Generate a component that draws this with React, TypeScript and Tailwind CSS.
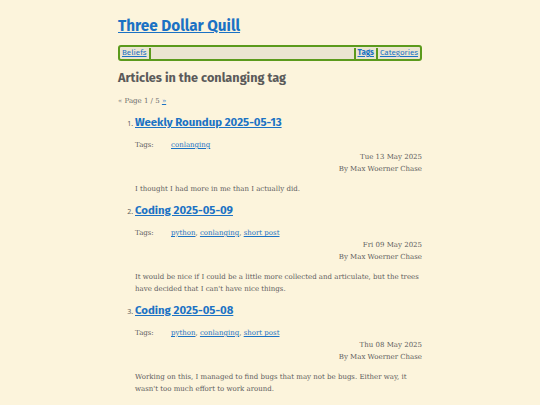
import React from "react";

const articles = [
  {
    title: "Weekly Roundup 2025-05-13",
    tags: ["conlanging"],
    date: "Tue 13 May 2025",
    summary: "I thought I had more in me than I actually did.",
  },
  {
    title: "Coding 2025-05-09",
    tags: ["python", "conlanging", "short post"],
    date: "Fri 09 May 2025",
    summary:
      "It would be nice if I could be a little more collected and articulate, but the trees have decided that I can't have nice things.",
  },
  {
    title: "Coding 2025-05-08",
    tags: ["python", "conlanging", "short post"],
    date: "Thu 08 May 2025",
    summary:
      "Working on this, I managed to find bugs that may not be bugs. Either way, it wasn't too much effort to work around.",
  },
];

const sans = "font-['Fira_Sans','Open_Sans',sans-serif]";
const serif = "font-['Roboto_Slab','DejaVu_Serif',serif]";

export default function App() {
  return (
    <div className="min-h-screen bg-[#fcf4dc] text-[#5a5a5a]">
      <div className="w-[304px] mx-auto pt-[15px]">
        {/* Header */}
        <h1 className={`${sans} text-[15.3px] font-bold leading-[22px]`}>
          <a href="#" className="text-[#1b72c4] underline">Three Dollar Quill</a>
        </h1>

        {/* Nav */}
        <nav className={`${sans} mt-[8px] flex items-center h-[16px] border-2 border-[#5b9a1c] rounded-[3px] bg-[#ebe5d1] text-[8px] px-[1px]`}>
          <a href="#" className="text-[#1b72c4] underline px-[1px]">Beliefs</a>
          <span className="w-[2px] h-[11px] bg-[#5b9a1c] ml-[1px]" />
          <span className="flex-1" />
          <span className="w-[2px] h-[11px] bg-[#5b9a1c] mr-[1px]" />
          <a href="#" className="text-[#1b72c4] underline font-bold px-[1px]">Tags</a>
          <span className="w-[2px] h-[11px] bg-[#5b9a1c] mx-[1px]" />
          <a href="#" className="text-[#1b72c4] underline px-[1px]">Categories</a>
        </nav>

        <h2 className={`${sans} mt-[8px] text-[12.7px] font-bold leading-[18px] text-[#5a5a5a]`}>
          Articles in the conlanging tag
        </h2>

        <p className={`${serif} mt-[8px] text-[7px] leading-[12px] text-[#6a6a6a]`}>
          « Page 1 / 5 <a href="#" className="text-[#1b72c4] underline">»</a>
        </p>

        {/* Articles */}
        <ol className="mt-[6px] pl-[17px] list-decimal marker:text-[7px] marker:text-[#5c5c5c]">
          {articles.map((a) => (
            <li key={a.title} className="mb-[6px]">
              <h3 className={`${sans} text-[11.4px] font-bold leading-[18px]`}>
                <a href="#" className="text-[#1b72c4] underline">{a.title}</a>
              </h3>
              <div className={`${serif} text-[7px] text-[#5c5c5c]`}>
                <div className="mt-[8px] flex leading-[12px]">
                  <span className="w-[36px]">Tags:</span>
                  <span>
                    {a.tags.map((t, i) => (
                      <React.Fragment key={t}>
                        <a href="#" className="text-[#1b72c4] underline">{t}</a>
                        {i < a.tags.length - 1 ? ", " : ""}
                      </React.Fragment>
                    ))}
                  </span>
                </div>
                <div className="text-right leading-[12px]">{a.date}</div>
                <div className="text-right leading-[12px]">By Max Woerner Chase</div>
                <p className="mt-[8px] text-[7px] leading-[12px]">{a.summary}</p>
              </div>
            </li>
          ))}
        </ol>
      </div>
    </div>
  );
}
